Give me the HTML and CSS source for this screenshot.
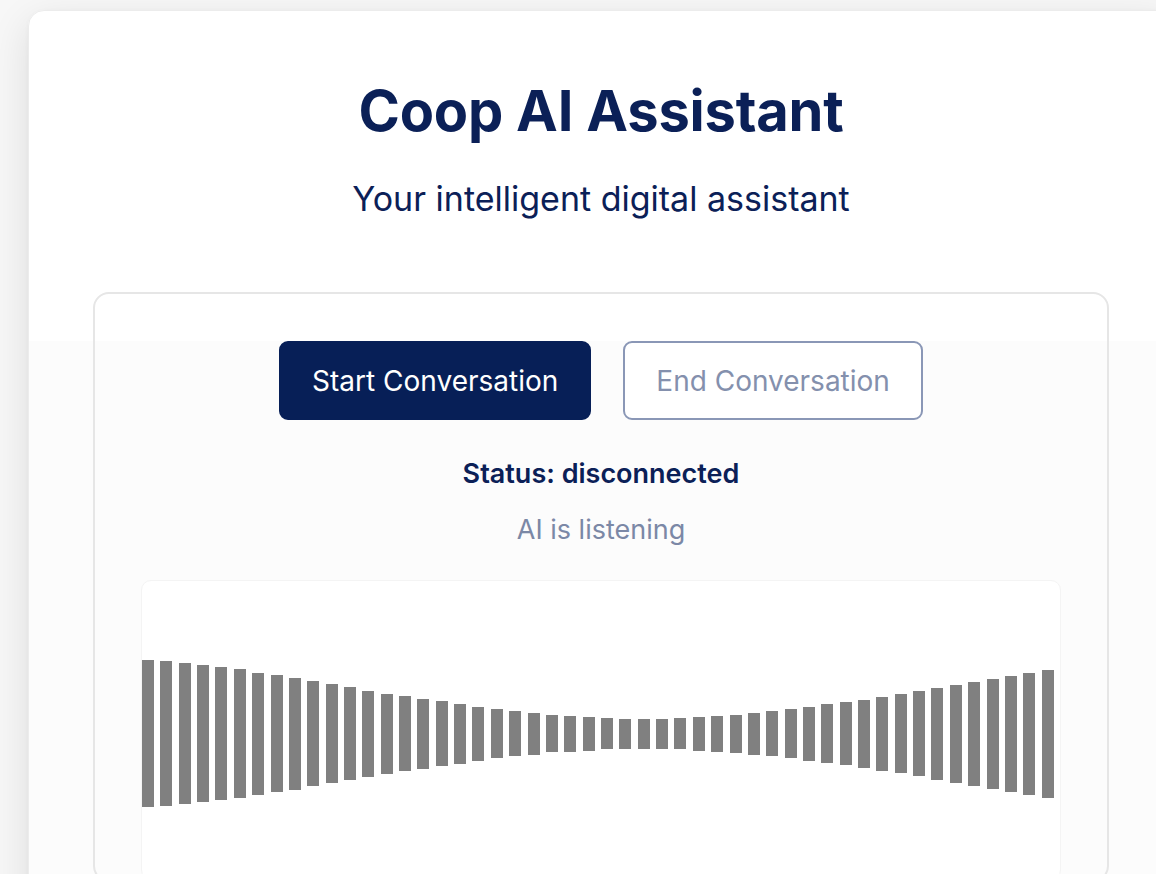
FILE: index.html
```html
<!DOCTYPE html>
<html lang="en">
<head>
<meta charset="utf-8">
<title>Coop AI Assistant</title>
<link rel="stylesheet" href="styles.css">
</head>
<body>
<main class="shell">
  <h1 class="title">Coop AI Assistant</h1>
  <p class="subtitle">Your intelligent digital assistant</p>
  <section class="panel">
    <div class="actions">
      <button class="btn btn-primary" type="button">Start Conversation</button>
      <button class="btn btn-outline" type="button">End Conversation</button>
    </div>
    <p class="status">Status: disconnected</p>
    <p class="listening">AI is listening</p>
    <div class="visualizer">
      <div class="bars">
        <span class="bar" style="height:147px"></span>
        <span class="bar" style="height:145px"></span>
        <span class="bar" style="height:141px"></span>
        <span class="bar" style="height:137px"></span>
        <span class="bar" style="height:133px"></span>
        <span class="bar" style="height:129px"></span>
        <span class="bar" style="height:122px"></span>
        <span class="bar" style="height:117px"></span>
        <span class="bar" style="height:112px"></span>
        <span class="bar" style="height:105px"></span>
        <span class="bar" style="height:99px"></span>
        <span class="bar" style="height:93px"></span>
        <span class="bar" style="height:86px"></span>
        <span class="bar" style="height:80px"></span>
        <span class="bar" style="height:75px"></span>
        <span class="bar" style="height:70px"></span>
        <span class="bar" style="height:65px"></span>
        <span class="bar" style="height:60px"></span>
        <span class="bar" style="height:54px"></span>
        <span class="bar" style="height:49px"></span>
        <span class="bar" style="height:45px"></span>
        <span class="bar" style="height:42px"></span>
        <span class="bar" style="height:37px"></span>
        <span class="bar" style="height:36px"></span>
        <span class="bar" style="height:34px"></span>
        <span class="bar" style="height:31px"></span>
        <span class="bar" style="height:30px"></span>
        <span class="bar" style="height:30px"></span>
        <span class="bar" style="height:30px"></span>
        <span class="bar" style="height:31px"></span>
        <span class="bar" style="height:34px"></span>
        <span class="bar" style="height:36px"></span>
        <span class="bar" style="height:38px"></span>
        <span class="bar" style="height:42px"></span>
        <span class="bar" style="height:45px"></span>
        <span class="bar" style="height:49px"></span>
        <span class="bar" style="height:54px"></span>
        <span class="bar" style="height:59px"></span>
        <span class="bar" style="height:63px"></span>
        <span class="bar" style="height:68px"></span>
        <span class="bar" style="height:74px"></span>
        <span class="bar" style="height:79px"></span>
        <span class="bar" style="height:85px"></span>
        <span class="bar" style="height:92px"></span>
        <span class="bar" style="height:98px"></span>
        <span class="bar" style="height:104px"></span>
        <span class="bar" style="height:110px"></span>
        <span class="bar" style="height:116px"></span>
        <span class="bar" style="height:122px"></span>
        <span class="bar" style="height:128px"></span>
      </div>
    </div>
  </section>
</main>
</body>
</html>
```
FILE: styles.css
```css
html, body {
  margin: 0;
  padding: 0;
  overflow: hidden;
}

body {
  background: #f7f7f7;
  font-family: Inter, "Noto Sans", "Liberation Sans", sans-serif;
  color: #0b2057;
  display: flex;
  align-items: flex-start;
  padding: 10px 0 0 28px;
  height: 874px;
  box-sizing: border-box;
}

.shell {
  flex-shrink: 0;
  width: 1146px;
  min-height: 1000px;
  box-sizing: border-box;
  padding: 67px 64px 0;
  border: 1px solid #ececec;
  border-radius: 16px;
  background: linear-gradient(#ffffff 0, #ffffff 330px, #fcfcfc 330px);
  box-shadow: 0 12px 40px rgba(0, 0, 0, 0.11), 0 1px 4px rgba(0, 0, 0, 0.03);
  display: flex;
  flex-direction: column;
  align-items: center;
}

.title {
  margin: 0;
  font-size: 56px;
  line-height: 67px;
  font-weight: 700;
  letter-spacing: -0.2px;
  color: #0b2057;
}

.subtitle {
  margin: 35px 0 0;
  font-size: 34px;
  line-height: 38px;
  font-weight: 400;
  color: #0b2057;
}

.panel {
  align-self: stretch;
  margin-top: 74px;
  border: 2px solid #e6e6e6;
  border-radius: 16px;
  padding: 47px 46px 0;
  display: flex;
  flex-direction: column;
  align-items: center;
}

.actions {
  display: flex;
  gap: 32px;
}

.btn {
  font-family: inherit;
  font-size: 28px;
  line-height: 32px;
  height: 79px;
  padding: 0 31px;
  border-radius: 9px;
  border: 2px solid transparent;
  box-sizing: border-box;
  cursor: pointer;
}

.btn-primary {
  background: #071f57;
  border-color: #071f57;
  color: #ffffff;
}

.btn-outline {
  background: #ffffff;
  border-color: #8a97b6;
  color: #8490ad;
}

.status {
  margin: 38px 0 0;
  font-size: 27px;
  line-height: 31px;
  font-weight: 600;
  color: #0b2057;
}

.listening {
  margin: 25px 0 0;
  font-size: 27px;
  line-height: 31px;
  font-weight: 400;
  color: #7b88a6;
}

.visualizer {
  align-self: stretch;
  margin-top: 35px;
  height: 300px;
  border: 1px solid #f4f4f4;
  border-radius: 10px;
  background: #ffffff;
  display: flex;
  align-items: center;
  padding-top: 7px;
  box-sizing: border-box;
}

.bars {
  display: flex;
  align-items: center;
  gap: 6.37px;
  filter: blur(0.5px);
}

.bar {
  display: block;
  width: 12px;
  background: #808080;
}
```
